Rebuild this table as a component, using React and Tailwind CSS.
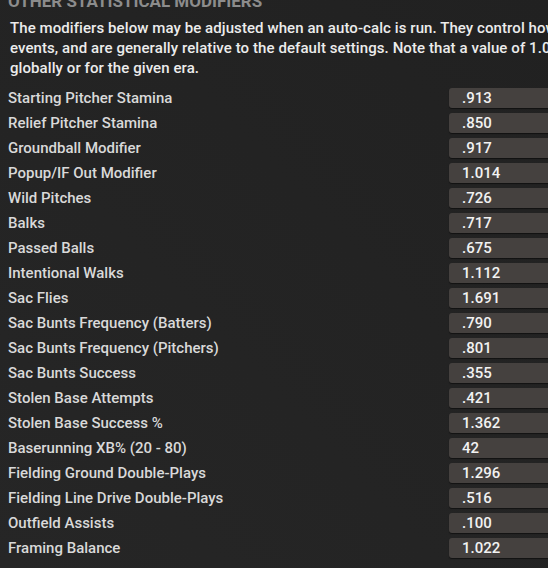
import React from "react";

const rows = [
  ["Starting Pitcher Stamina", ".913"],
  ["Relief Pitcher Stamina", ".850"],
  ["Groundball Modifier", ".917"],
  ["Popup/IF Out Modifier", "1.014"],
  ["Wild Pitches", ".726"],
  ["Balks", ".717"],
  ["Passed Balls", ".675"],
  ["Intentional Walks", "1.112"],
  ["Sac Flies", "1.691"],
  ["Sac Bunts Frequency (Batters)", ".790"],
  ["Sac Bunts Frequency (Pitchers)", ".801"],
  ["Sac Bunts Success", ".355"],
  ["Stolen Base Attempts", ".421"],
  ["Stolen Base Success %", "1.362"],
  ["Baserunning XB% (20 - 80)", "42"],
  ["Fielding Ground Double-Plays", "1.296"],
  ["Fielding Line Drive Double-Plays", ".516"],
  ["Outfield Assists", ".100"],
  ["Framing Balance", "1.022"],
];

export default function App() {
  return (
    <div
      className="w-[548px] h-[568px] overflow-hidden bg-gradient-to-tr from-[#262626] to-[#212121]"
      style={{ fontFamily: "Roboto, 'Liberation Sans', sans-serif" }}
    >
      <div className="w-[640px]">
        <h2 className="-mt-[9px] pl-[8px] text-[17px] leading-5 font-bold uppercase text-[#8c8c8c]">
          Other Statistical Modifiers
        </h2>
        <p className="mt-[7px] pl-[10px] text-[15px] tracking-[0.08px] leading-5 font-medium text-[#ececec] whitespace-nowrap">
          The modifiers below may be adjusted when an auto-calc is run. They control how often certain
          <br />
          events, and are generally relative to the default settings. Note that a value of 1.000 means no change
          <br />
          globally or for the given era.
        </p>
        <div className="mt-[10px] flex flex-col gap-[5px]">
          {rows.map(([label, value]) => (
            <div key={label} className="flex items-center h-5">
              <div className="w-[449px] pl-[8px] text-[15px] leading-5 font-medium text-[#d9d9d9] whitespace-nowrap">
                {label}
              </div>
              <div className="w-[150px] h-5 rounded-[3px] bg-[#45413f] shadow-[0_1px_1px_rgba(0,0,0,0.5)] pl-[13px] text-[15px] leading-5 font-medium text-[#f2f2f2]">
                {value}
              </div>
            </div>
          ))}
        </div>
      </div>
    </div>
  );
}
